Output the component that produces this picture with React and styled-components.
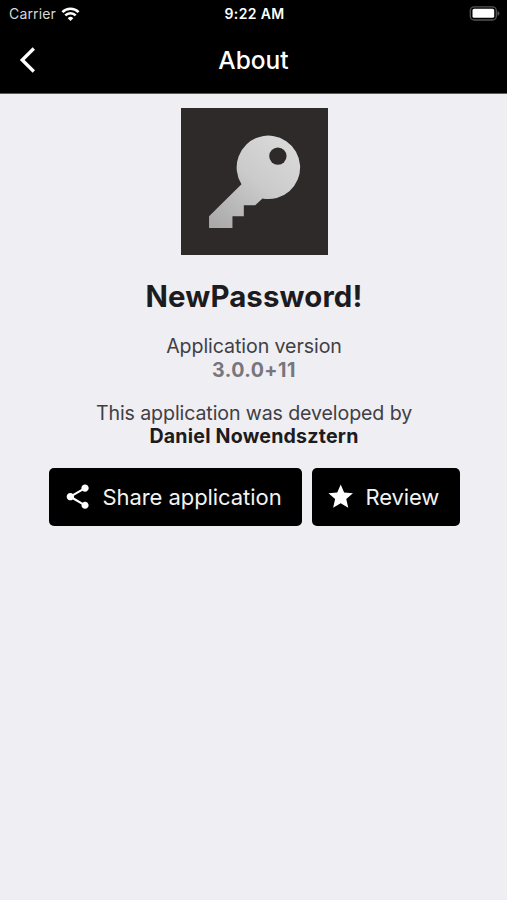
import React from "react";
import styled, { createGlobalStyle } from "styled-components";

const GlobalStyle = createGlobalStyle`
  * { box-sizing: border-box; }
  body { margin: 0; background: #efeef3; }
`;

const Screen = styled.div`
  display: flex;
  flex-direction: column;
  width: 507px;
  height: 900px;
  overflow: hidden;
  background: #efeef3;
  font-family: Inter, "Liberation Sans", sans-serif;
`;

const Header = styled.header`
  flex: none;
  height: 94px;
  background: #000;
  border-bottom: 1px solid #5c5c5f;
  color: #fff;
`;

const StatusBar = styled.div`
  display: grid;
  grid-template-columns: 1fr auto 1fr;
  align-items: center;
  height: 26px;
  padding: 1px 7px 0 9px;
`;

const Carrier = styled.div`
  display: flex;
  align-items: center;
  gap: 5px;
`;

const Label = styled.span`
  display: block;
  white-space: nowrap;
  font-size: ${(p) => p.$size}px;
  line-height: ${(p) => p.$line}px;
  font-weight: ${(p) => p.$weight || 400};
  letter-spacing: ${(p) => p.$track || 0}px;
  color: ${(p) => p.$color || "#fff"};
`;

const BatterySlot = styled.div`
  display: flex;
  justify-content: flex-end;
`;

const NavBar = styled.nav`
  display: grid;
  grid-template-columns: 60px 1fr 60px;
  align-items: center;
  height: 67px;
`;

const BackButton = styled.button`
  display: flex;
  padding: 0 0 0 19px;
  border: 0;
  background: none;
`;

const Title = styled.h1`
  margin: 0;
  text-align: center;
`;

const Content = styled.main`
  display: flex;
  flex-direction: column;
  align-items: center;
  padding: 14px 0 0 1px;
`;

const AppIcon = styled.svg`
  display: block;
  width: 147px;
  height: 147px;
`;

const Group = styled.section`
  display: flex;
  flex-direction: column;
  align-items: center;
  margin-top: ${(p) => p.$top}px;
`;

const Actions = styled.div`
  display: flex;
  gap: 10px;
  margin-top: 19.5px;
`;

const ActionButton = styled.button`
  display: flex;
  align-items: center;
  gap: 10px;
  width: ${(p) => p.$width}px;
  height: 58.5px;
  padding: 0 0 0 14.5px;
  border: 0;
  border-radius: 5px;
  background: #000;
  font-family: inherit;
`;

const Glyph = styled.svg`
  display: block;
  flex: none;
  width: 29.4px;
  height: 29.4px;
  fill: #fff;
`;

function WifiIcon() {
  return (
    <svg width="19" height="14" viewBox="0 0 19 14" fill="none" stroke="#fff" strokeWidth="2.6">
      <path d="M1.4 5.1a11.6 11.6 0 0 1 16.2 0" />
      <path d="M4.3 8.4a7.4 7.4 0 0 1 10.4 0" />
      <path d="M9.5 14 6.7 11.2a4 4 0 0 1 5.6 0Z" fill="#fff" stroke="none" />
    </svg>
  );
}

function BatteryIcon() {
  return (
    <svg width="31" height="15" viewBox="0 0 31 15">
      <rect x="1.3" y="0.8" width="26" height="13.2" rx="3.8" fill="none" stroke="#555" strokeWidth="1.3" />
      <rect x="3.5" y="2.8" width="21.7" height="9" rx="1.6" fill="#fff" />
      <path d="M28.5 5.1q2 .7 2 2.3t-2 2.3Z" fill="#555" />
    </svg>
  );
}

function KeyLogo() {
  return (
    <AppIcon viewBox="0 0 440 440">
      <defs>
        <linearGradient id="silver" gradientUnits="userSpaceOnUse" x1="320" y1="90" x2="100" y2="360">
          <stop offset="0" stopColor="#dadada" />
          <stop offset="0.45" stopColor="#cbcbcb" />
          <stop offset="1" stopColor="#a9a9a9" />
        </linearGradient>
      </defs>
      <rect width="440" height="440" fill="#2d2a29" />
      <path
        fill="url(#silver)"
        d="M181 228 84 324v35h70v-35h34v-33h34l22-20A95 95 0 1 0 181 228Z"
      />
      <circle cx="290" cy="144" r="26" fill="#2d2a29" />
    </AppIcon>
  );
}

export default function App() {
  return (
    <Screen>
      <GlobalStyle />
      <Header>
        <StatusBar>
          <Carrier>
            <Label $size={14} $line={18} $track={0.15} $color="#d8d8d8">Carrier</Label>
            <WifiIcon />
          </Carrier>
          <Label $size={14} $line={18} $weight={600} $track={0.35}>9:22 AM</Label>
          <BatterySlot><BatteryIcon /></BatterySlot>
        </StatusBar>
        <NavBar>
          <BackButton aria-label="Back">
            <svg width="17" height="26" viewBox="0 0 17 26" fill="none" stroke="#fff" strokeWidth="3.3">
              <path d="M14.8 1.5 3.2 13l11.6 11.5" />
            </svg>
          </BackButton>
          <Title><Label $size={24.5} $line={30} $weight={500}>About</Label></Title>
        </NavBar>
      </Header>
      <Content>
        <KeyLogo />
        <Group $top={24}>
          <Label $size={29.4} $line={36} $weight={700} $track={0.12} $color="#1c1b20">NewPassword!</Label>
        </Group>
        <Group $top={19}>
          <Label $size={19.6} $line={24} $track={-0.08} $color="#404044">Application version</Label>
          <Label $size={19.6} $line={24} $weight={700} $track={0.45} $color="#77767c">3.0.0+11</Label>
        </Group>
        <Group $top={19}>
          <Label $size={19.6} $line={24} $track={-0.11} $color="#404044">This application was developed by</Label>
          <Label $size={19.6} $line={23} $weight={700} $track={0.21} $color="#1c1b20">Daniel Nowendsztern</Label>
        </Group>
        <Actions>
          <ActionButton $width={253}>
            <Glyph viewBox="0 0 24 24">
              <path d="M18 16.08c-.76 0-1.44.3-1.96.77L8.91 12.7c.05-.23.09-.46.09-.7s-.04-.47-.09-.7l7.05-4.11c.54.5 1.25.81 2.04.81 1.66 0 3-1.34 3-3s-1.34-3-3-3-3 1.34-3 3c0 .24.04.47.09.7L8.04 9.81C7.5 9.31 6.79 9 6 9c-1.66 0-3 1.34-3 3s1.34 3 3 3c.79 0 1.5-.31 2.04-.81l7.12 4.16c-.05.21-.08.43-.08.65 0 1.61 1.31 2.92 2.92 2.92 1.61 0 2.92-1.31 2.92-2.92s-1.31-2.92-2.92-2.92z" />
            </Glyph>
            <Label $size={22} $line={28} $track={-0.06} $color="#f2f2f2">Share application</Label>
          </ActionButton>
          <ActionButton $width={148}>
            <Glyph viewBox="0 0 24 24">
              <path d="M12 17.27 18.18 21l-1.64-7.03L22 9.24l-7.19-.61L12 2 9.19 8.63 2 9.24l5.46 4.73L5.82 21z" />
            </Glyph>
            <Label $size={22} $line={28} $track={-0.1} $color="#f2f2f2">Review</Label>
          </ActionButton>
        </Actions>
      </Content>
    </Screen>
  );
}
